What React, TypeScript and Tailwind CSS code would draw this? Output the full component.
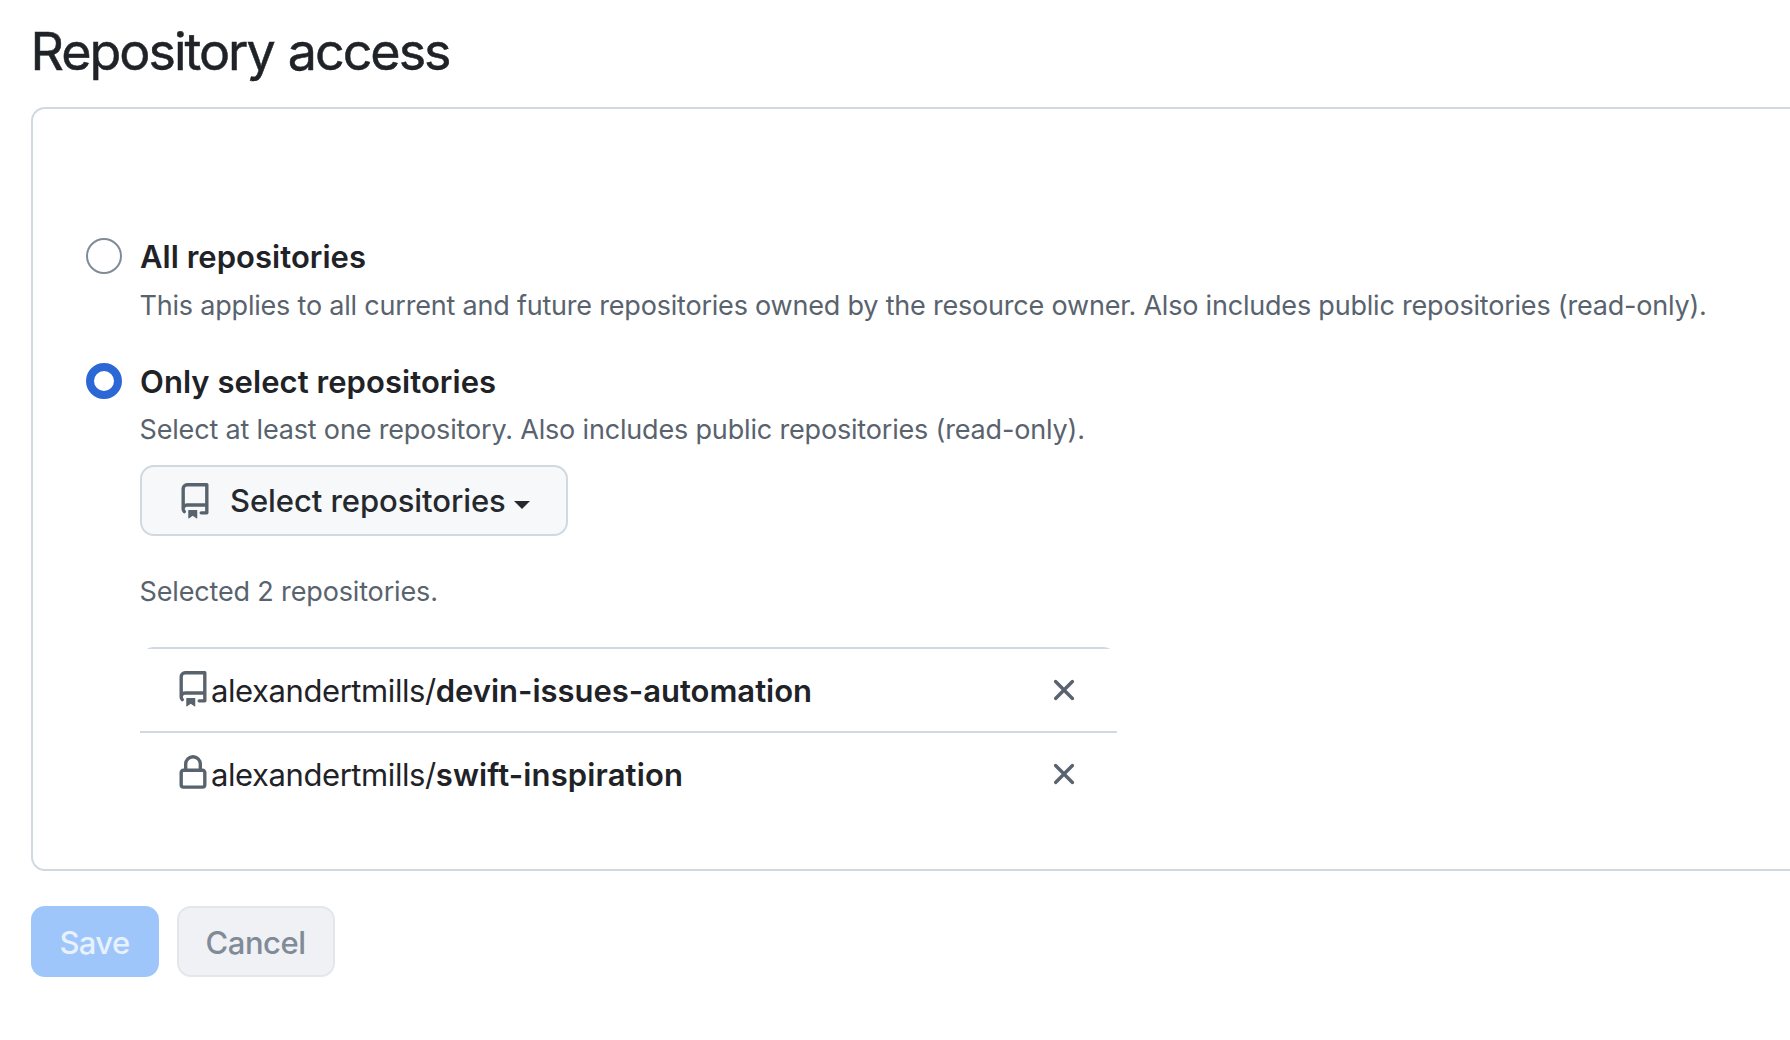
import type { ReactNode } from 'react';

const REPO =
  'M2 2.5A2.5 2.5 0 0 1 4.5 0h8.75a.75.75 0 0 1 .75.75v12.5a.75.75 0 0 1-.75.75h-2.5a.75.75 0 0 1 0-1.5h1.75v-2h-8a1 1 0 0 0-.714 1.7.75.75 0 1 1-1.072 1.05A2.495 2.495 0 0 1 2 11.5Zm10.5-1h-8a1 1 0 0 0-1 1v6.708A2.486 2.486 0 0 1 4.5 9h8ZM5 12.25a.25.25 0 0 1 .25-.25h3.5a.25.25 0 0 1 .25.25v3.25a.25.25 0 0 1-.4.2l-1.45-1.087a.249.249 0 0 0-.3 0L5.4 15.7a.25.25 0 0 1-.4-.2Z';
const LOCK =
  'M4 4a4 4 0 0 1 8 0v2h.25c.966 0 1.75.784 1.75 1.75v5.5A1.75 1.75 0 0 1 12.25 15h-8.5A1.75 1.75 0 0 1 2 13.25v-5.5C2 6.784 2.784 6 3.75 6H4Zm8.25 3.5h-8.5a.25.25 0 0 0-.25.25v5.5c0 .138.112.25.25.25h8.5a.25.25 0 0 0 .25-.25v-5.5a.25.25 0 0 0-.25-.25ZM10.5 6V4a2.5 2.5 0 1 0-5 0v2Z';
const CLOSE =
  'M3.72 3.72a.75.75 0 0 1 1.06 0L8 6.94l3.22-3.22a.749.749 0 0 1 1.275.326.749.749 0 0 1-.215.734L9.06 8l3.22 3.22a.749.749 0 0 1-.326 1.275.749.749 0 0 1-.734-.215L8 9.06l-3.22 3.22a.751.751 0 0 1-1.042-.018.751.751 0 0 1-.018-1.042L6.94 8 3.72 4.78a.75.75 0 0 1 0-1.06Z';

function Icon({ path, className = '' }: { path: string; className?: string }) {
  return (
    <svg viewBox="0 0 16 16" className={`size-9 shrink-0 fill-[#59636e] ${className}`} aria-hidden="true">
      <path d={path} />
    </svg>
  );
}

function Option({
  label,
  labelClass = '',
  radioClass,
  children,
}: {
  label: string;
  labelClass?: string;
  radioClass: string;
  children: ReactNode;
}) {
  return (
    <div className="flex items-start gap-[18px]">
      <span className={`size-9 shrink-0 rounded-full bg-white ${radioClass}`} />
      <div>
        <div className={`text-[31px] leading-[48px] font-semibold ${labelClass}`}>{label}</div>
        {children}
      </div>
    </div>
  );
}

const repositories = [
  { icon: REPO, name: 'devin-issues-automation', nameClass: 'tracking-[-0.02px]' },
  { icon: LOCK, name: 'swift-inspiration', nameClass: 'tracking-[0.12px]' },
];

export default function App() {
  return (
    <main className="h-[1040px] overflow-hidden bg-white pt-[19px] pl-[31px] font-['Inter',sans-serif] whitespace-nowrap text-[#1f2328]">
      <h1 className="-ml-[0.5px] text-[52px] leading-[65px] font-normal tracking-[-2.02px] [word-spacing:1.5px] [-webkit-text-stroke:0.5px_#1f2328]">
        Repository access
      </h1>

      <section className="mt-[23px] h-[764px] rounded-l-[14px] border-2 border-r-0 border-[#d1d9e0] pt-[123px] pl-[53px]">
        <Option
          label="All repositories"
          labelClass="pt-px tracking-[0.03px]"
          radioClass="mt-[6px] border-2 border-[#818b98]"
        >
          <p className="-ml-[0.5px] mt-[5px] text-[27px] leading-10 tracking-[-0.203px] text-[#59636e]">
            This applies to all current and future repositories owned by the resource owner. Also includes public
            repositories (read-only).
          </p>
        </Option>

        <div className="mt-8">
          <Option
            label="Only select repositories"
            labelClass="tracking-[0.06px]"
            radioClass="mt-[4.6px] border-8 border-[#2c67d6]"
          >
            <p className="-ml-[0.5px] mt-1 text-[27px] leading-10 tracking-[-0.175px] text-[#59636e]">
              Select at least one repository. Also includes public repositories (read-only).
            </p>
            <button className="mt-[15px] flex h-[71px] w-[428px] items-center rounded-[14px] border-2 border-[#d1d9e0] bg-[#f6f8fa] pl-[34.5px] text-[31px] font-medium tracking-[-0.07px] text-[#25292e]">
              <Icon path={REPO} className="mt-px" />
              <span className="mt-[2px] ml-[17.5px]">Select repositories</span>
              <svg viewBox="0 0 16 8" className="mt-[9px] ml-[8px] h-2 w-4 fill-[#25292e]" aria-hidden="true">
                <path d="M0 0h16L8 8Z" />
              </svg>
            </button>
            <p className="-ml-[0.5px] mt-9 text-[27px] leading-10 tracking-[-0.15px] text-[#59636e]">
              Selected 2 repositories.
            </p>
            <ul className="mt-[35px] w-[977px] overflow-hidden rounded-[14px]">
              {repositories.map((repo) => (
                <li
                  key={repo.name}
                  className="flex h-[84px] items-center border-t-2 border-[#d1d9e0] pr-[35px] pl-[35px] text-[31px]"
                >
                  <Icon path={repo.icon} className="-mt-[2px]" />
                  <span className="mt-[3px] tracking-[-0.42px]">alexandertmills/</span>
                  <span className={`mt-[3px] font-semibold ${repo.nameClass}`}>{repo.name}</span>
                  <button className="ml-auto" aria-label={`Remove ${repo.name}`}>
                    <Icon path={CLOSE} />
                  </button>
                </li>
              ))}
            </ul>
          </Option>
        </div>
      </section>

      <div className="mt-[35px] flex gap-[18px] text-[31px] font-medium">
        <button className="h-[71px] w-32 rounded-[14px] bg-[#9ec6fb] pt-1 pr-[1px] tracking-[-0.6px] text-[#e8f1fe]">
          Save
        </button>
        <button className="h-[71px] w-[158px] rounded-[14px] border-2 border-[#e3e7eb] bg-[#eff1f5] pt-1 pr-[1px] tracking-[-0.5px] text-[#818b98]">
          Cancel
        </button>
      </div>
    </main>
  );
}
